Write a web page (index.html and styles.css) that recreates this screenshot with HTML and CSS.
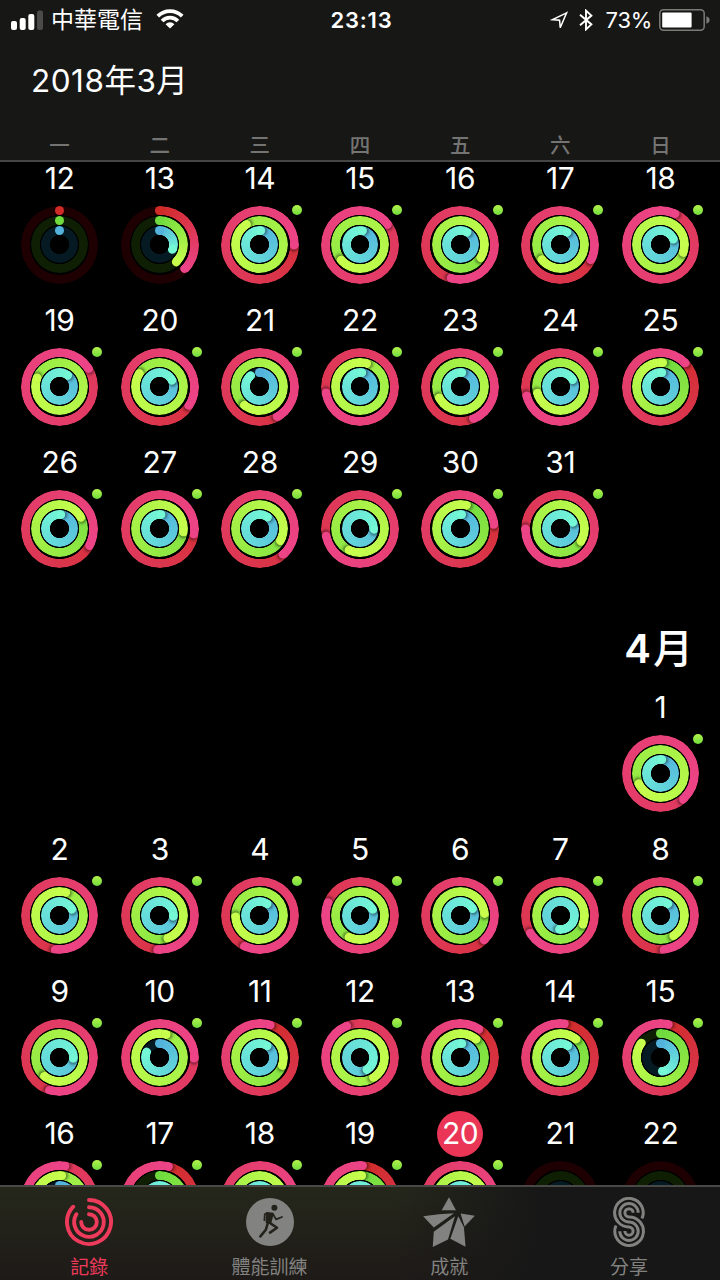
FILE: index.html
```html
<!DOCTYPE html>
<html lang="zh-Hant">
<head>
    <meta charset="UTF-8">
    <meta name="viewport" content="width=device-width, initial-scale=1.0">
    <title>記錄</title>
    <link rel="stylesheet" href="styles.css">
</head>
<body>
    <div class="screen">
        <header class="header">
            <div class="status-bar">
                <div class="status-left">
                    <svg class="signal" viewBox="0 0 32 20" width="32" height="20">
                        <rect x="0" y="11" width="6" height="9" rx="2" fill="#fff"/>
                        <rect x="8.7" y="8" width="6" height="12" rx="2" fill="#fff"/>
                        <rect x="17.3" y="4" width="6" height="16" rx="2" fill="#fff"/>
                        <rect x="26" y="0.5" width="6" height="19.5" rx="2" fill="#4b4b4a"/>
                    </svg>
                    <span class="carrier">中華電信</span>
                    <svg class="wifi" viewBox="0 0 28 20" width="28" height="20">
                        <g fill="none" stroke="#fff" stroke-width="3.8">
                            <path d="M1.8 7.2a17.2 17.2 0 0 1 24.4 0"/>
                            <path d="M6.1 12a11 11 0 0 1 15.8 0"/>
                        </g>
                        <path d="M14 19.6l-4.4-4.4a6.2 6.2 0 0 1 8.8 0z" fill="#fff"/>
                    </svg>
                </div>
                <span class="time">23:13</span>
                <div class="status-right">
                    <svg class="location" viewBox="0 0 18 19" width="18" height="19">
                        <path d="M16.6 1.8L2.6 8.6l7 .6 .6 7.6z" fill="none" stroke="#fff" stroke-width="1.5"/>
                    </svg>
                    <svg class="bluetooth" viewBox="0 0 14 22" width="14" height="22">
                        <path d="M1 5.8l11.4 9.6L7 20.4V1.6l5.4 5L1 16.2" fill="none" stroke="#fff" stroke-width="1.9"/>
                    </svg>
                    <span class="percent">73%</span>
                    <svg class="battery" viewBox="0 0 51 22" width="51" height="22">
                        <rect x="0.8" y="0.8" width="44.4" height="20.4" rx="3.6" fill="none" stroke="#7a7a79" stroke-width="1.5"/>
                        <rect x="3.2" y="3.4" width="29.4" height="15.2" rx="1" fill="#fff"/>
                        <path d="M47.4 7.2q3.2 1.2 3.2 3.8t-3.2 3.8z" fill="#7a7a79"/>
                    </svg>
                </div>
            </div>
            <h1 class="title">2018年3月</h1>
            <div class="weekdays">
                <span>一</span><span>二</span><span>三</span><span>四</span><span>五</span><span>六</span><span>日</span>
            </div>
        </header>

        <main class="calendar">
            <section class="month" id="march"></section>
            <div class="month-title"><h2>4<span>月</span></h2></div>
            <section class="month" id="april"></section>
        </main>

        <nav class="tab-bar">
            <a class="tab active">
                <svg viewBox="0 0 48 48" width="48" height="48">
                    <g fill="none" stroke="#ee3a5b" stroke-width="3.9" stroke-linecap="round">
                        <path d="M24 2A22 22 0 1 1 8.2 8.7"/>
                        <path d="M24 9.2A14.8 14.8 0 1 1 11.4 16.2"/>
                        <path d="M24 16.2A7.8 7.8 0 1 1 16.2 24"/>
                    </g>
                </svg>
                <span>記錄</span>
            </a>
            <a class="tab">
                <svg viewBox="0 0 48 48" width="48" height="48">
                    <circle cx="24" cy="24" r="24" fill="#828280"/>
                    <circle cx="28.4" cy="9.8" r="3" fill="#23221b"/>
                    <path d="M21 14.8l6 .8-2.6 9.6-4-1z" fill="#23221b" stroke="#23221b" stroke-width="1.6" stroke-linejoin="round"/>
                    <g fill="none" stroke="#23221b" stroke-linecap="round" stroke-linejoin="round">
                        <path d="M21 15l-2.2 1.2-.4 6" stroke-width="1.8"/>
                        <path d="M27.2 16.4l2.8 5 6-2.4" stroke-width="1.8"/>
                        <path d="M24 25l7 4.8-7 4.8" stroke-width="2.6"/>
                        <path d="M21.8 25l-2 6.8-5.4 6.6" stroke-width="2.6"/>
                    </g>
                </svg>
                <span>體能訓練</span>
            </a>
            <a class="tab">
                <svg viewBox="0 0 156 151" width="52" height="50">
                    <g fill="#828280">
                        <path d="M78 1l21 39H56z"/>
                        <path d="M0 58q48-8 93-9L32 92z"/>
                        <path d="M113 50l43 7-31 32z"/>
                        <path d="M96 58L75 128 29 151l3-46z"/>
                        <path d="M106 58l17 33 5 59-46-24z"/>
                    </g>
                </svg>
                <span>成就</span>
            </a>
            <a class="tab">
                <svg viewBox="0 0 32 50" width="32" height="50">
                    <g fill="none" stroke="#828280" stroke-width="3">
                        <path d="M29 21.5A14.3 14.3 0 1 0 16 30A4.1 4.1 0 1 1 11.9 34.1"/>
                        <path d="M25.2 15.8A9.2 9.2 0 1 0 16 25A9.2 9.2 0 1 1 6.8 34.2"/>
                        <path d="M20.1 15.8A4.1 4.1 0 1 0 16 19.9A14.3 14.3 0 1 1 3 28.5"/>
                    </g>
                </svg>
                <span>分享</span>
            </a>
        </nav>
    </div>

    <script src="script.js"></script>
</body>
</html>
```
FILE: styles.css
```css
body {
    margin: 0;
    background-color: #000;
    color: #fff;
    font-family: Inter, "Noto Sans CJK TC", sans-serif;
}
.screen {
    display: flex;
    flex-direction: column;
    width: 720px;
    height: 1280px;
    overflow: hidden;
}
.header {
    flex: none;
    height: 160px;
    background-color: #171716;
    border-bottom: 2px solid #454546;
}
.status-bar {
    display: grid;
    grid-template-columns: 1fr auto 1fr;
    align-items: center;
    height: 40px;
    padding: 0 10px 0 11px;
}
.status-left,
.status-right {
    display: flex;
    align-items: center;
}
.status-right {
    justify-content: flex-end;
}
.carrier {
    margin: 0 13px 0 8px;
    font-size: 23px;
    line-height: 40px;
}
.wifi {
    margin-top: -2px;
}
.time {
    padding-left: 2px;
    font-size: 22px;
    font-weight: 600;
    letter-spacing: 0.8px;
}
.bluetooth {
    margin: 0 13px 0 11px;
}
.percent {
    margin-right: 7px;
    font-size: 22px;
    letter-spacing: -0.3px;
}
.title {
    margin: 16px 0 0 31px;
    font-size: 31.5px;
    font-weight: 400;
    letter-spacing: 0.5px;
    line-height: 50px;
}
.weekdays {
    display: grid;
    grid-template-columns: repeat(7, 1fr);
    margin-top: 25px;
    padding: 0 9.5px;
    color: #747473;
    font-size: 20.5px;
    font-weight: 500;
    line-height: 30px;
    text-align: center;
}
.calendar {
    flex: 1;
    min-height: 0;
}
.month {
    display: grid;
    grid-template-columns: repeat(7, 1fr);
    grid-auto-rows: 142px;
    padding: 0 9.5px;
}
.month-title {
    display: flex;
    justify-content: flex-end;
    height: 102.6px;
    padding-right: 27px;
}
.month-title h2 {
    margin: 31px 0 0;
    font-size: 40px;
    font-weight: 600;
    line-height: 60px;
}
.month-title span {
    margin-left: 2px;
    font-weight: 500;
}
.day {
    display: flex;
    flex-direction: column;
    align-items: center;
}
.number {
    width: 46px;
    margin-bottom: 12px;
    font-size: 30px;
    font-weight: 390;
    letter-spacing: -0.4px;
    line-height: 32px;
    text-align: center;
    white-space: nowrap;
}
.today .number {
    height: 46px;
    margin: -6px 0 4px;
    border-radius: 50%;
    background-color: #ea3556;
    line-height: 44px;
}
.rings {
    display: grid;
    place-items: center;
    position: relative;
    width: 77.6px;
    height: 77.6px;
}
.workout-dot {
    position: absolute;
    top: -1px;
    right: -3.7px;
    width: 10px;
    height: 10px;
    border-radius: 50%;
    background: linear-gradient(#b4f24c, #6fdc3c);
}
.ring {
    display: grid;
    grid-area: 1 / 1;
    width: var(--size);
    height: var(--size);
    border-radius: 50%;
    background: var(--track);
    -webkit-mask: radial-gradient(closest-side, transparent calc(100% - 9.2px), #000 calc(100% - 8.6px));
    mask: radial-gradient(closest-side, transparent calc(100% - 9.2px), #000 calc(100% - 8.6px));
}
.move {
    --size: 77.6px;
    --track: #1e0002;
    --from: #d02b27;
    --to: #ed4488;
}
.exercise {
    --size: 57.2px;
    --track: #0e1f04;
    --from: #6fdb3e;
    --to: #c8ff4d;
}
.stand {
    --size: 36.8px;
    --track: #051a23;
    --from: #53b3dd;
    --to: #74f8d6;
}
.ring.open {
    background: conic-gradient(var(--from), var(--to) var(--angle), var(--track) var(--angle));
}
/* past a full turn the visible part is the last 360 degrees */
.ring.closed {
    background: conic-gradient(from var(--angle), color-mix(in srgb, var(--to) var(--done), var(--from)), var(--to));
}
.arm {
    display: flex;
    justify-content: center;
    grid-area: 1 / 1;
    width: 100%;
    height: 100%;
}
.arm::before {
    content: "";
    width: 8.9px;
    height: 8.9px;
    border-radius: 50%;
    background-color: var(--from);
}
.arm.head {
    transform: rotate(var(--angle));
}
.arm.head::before {
    background-color: var(--to);
}
.closed .head::before {
    box-shadow: 2px 0 3px rgba(0, 0, 0, 0.45);
}
.tab-bar {
    display: grid;
    grid-template-columns: repeat(4, 1fr);
    flex: none;
    position: relative;
    z-index: 1;
    height: 93px;
    padding-right: 1px;
    border-top: 2px solid #484847;
    background:
        linear-gradient(90deg, rgba(23, 23, 23, 0) 55%, #171717 75%),
        linear-gradient(#25271b, #1e1a18);
}
.tab {
    display: flex;
    flex-direction: column;
    align-items: center;
    padding-top: 10px;
    color: #828280;
    font-size: 19px;
}
.tab svg {
    flex: none;
    height: 50px;
}
.tab span {
    margin-top: 7px;
    line-height: 28px;
}
.tab.active {
    padding-right: 1px;
    color: #ee3a5b;
}
```
FILE: script.js
```js
// [day, move, exercise, stand], each ring in degrees travelled
const march = [
    [12, 0, 0, 0], [13, 134, 136, 110], [14, 451, 687, 365], [15, 774, 590, 368],
    [16, 555, 483, 388], [17, 476, 591, 388], [18, 745, 829, 427],
    [19, 778, 651, 396], [20, 483, 663, 423], [21, 510, 579, 320], [22, 620, 737, 365],
    [23, 517, 602, 365], [24, 615, 614, 420], [25, 406, 365, 365],
    [26, 480, 422, 365], [27, 459, 458, 366], [28, 498, 480, 395], [29, 618, 566, 453],
    [30, 443, 374, 364], [31, 630, 482, 423]
];

const april = [
    [1, 859, 605, 365],
    [2, 548, 735, 423], [3, 544, 520, 453], [4, 567, 627, 393], [5, 653, 566, 423],
    [6, 495, 445, 420], [7, 600, 471, 543], [8, 535, 507, 392],
    [9, 558, 579, 453], [10, 811, 736, 292], [11, 378, 469, 393], [12, 698, 865, 511],
    [13, 394, 400, 365], [14, 368, 400, 391], [15, 373, 307, 171],
    [16, 729, 725, 300], [17, 375, 280, 420], [18, 470, 470, 440], [19, 365, 365, 430],
    [20, 480, 450, 430], [21], [22]
];

const today = 20;

function ring(name, degrees) {
    if (degrees === undefined) {
        return `<div class="ring ${name}"></div>`;
    }
    if (degrees < 360) {
        const head = degrees > 0 ? '<div class="arm head"></div>' : '';
        return `<div class="ring ${name} open" style="--angle: ${degrees}deg">
            <div class="arm"></div>${head}
        </div>`;
    }
    const done = ((degrees - 360) / degrees * 100).toFixed(1);
    return `<div class="ring ${name} closed" style="--angle: ${degrees % 360}deg; --done: ${done}%">
        <div class="arm head"></div>
    </div>`;
}

function renderMonth(id, days, firstColumn) {
    const month = document.getElementById(id);
    days.forEach(([number, move, exercise, stand], i) => {
        const day = document.createElement('div');
        day.className = 'day';
        if (id === 'april' && number === today) {
            day.classList.add('today');
        }
        if (i === 0) {
            day.style.gridColumnStart = firstColumn;
        }
        const dot = move >= 360 ? '<span class="workout-dot"></span>' : '';
        day.innerHTML = `<div class="number">${number}</div>
            <div class="rings">
                ${ring('move', move)}${ring('exercise', exercise)}${ring('stand', stand)}${dot}
            </div>`;
        month.appendChild(day);
    });
}

renderMonth('march', march, 1);
renderMonth('april', april, 7);
```
